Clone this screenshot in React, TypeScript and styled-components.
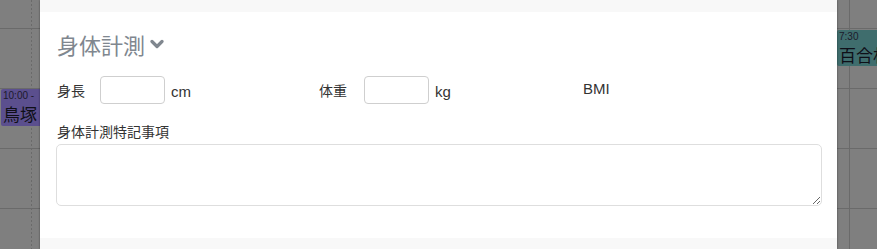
import styled, { createGlobalStyle } from "styled-components";

const GlobalStyle = createGlobalStyle`
  html, body {
    margin: 0;
    padding: 0;
    background: #7f7f7f;
  }
  body {
    font-family: "Helvetica Neue", "Liberation Sans", "Noto Sans CJK JP", sans-serif;
  }
`;

const Page = styled.div`
  display: flex;
  width: 877px;
  height: 249px;
  overflow: hidden;
  background: #7f7f7f;
`;

const Side = styled.div<{ $width: number }>`
  position: relative;
  flex: 0 0 ${(p) => p.$width}px;
  overflow: hidden;
`;

const SlotStack = styled.div<{ $lineLeft: number; $dotted?: boolean }>`
  display: flex;
  flex-direction: column;
  height: 100%;
  background-image: ${(p) =>
    p.$dotted
      ? `repeating-linear-gradient(to bottom, #6a6a6a 0 2px, transparent 2px 4px)`
      : `linear-gradient(#6a6a6a, #6a6a6a)`};
  background-size: 1px 100%;
  background-repeat: no-repeat;
  background-position: ${(p) => p.$lineLeft}px 0;
`;

const Slot = styled.div<{ $h: number }>`
  flex: 0 0 ${(p) => p.$h}px;
  border-bottom: 1px solid #6a6a6a;
`;

const Event = styled.div<{ $bg: string; $top: number; $left: number; $h: number }>`
  position: absolute;
  top: ${(p) => p.$top}px;
  left: ${(p) => p.$left}px;
  right: 0;
  height: ${(p) => p.$h}px;
  background: ${(p) => p.$bg};
  border-radius: 2px 0 0 2px;
  padding: 0 0 0 2px;
  box-sizing: border-box;
  overflow: hidden;
  white-space: nowrap;
`;

const EventTime = styled.div`
  font-size: 10px;
  line-height: 12px;
  margin-top: 1px;
  color: #1c1a2c;
`;

const EventTitle = styled.div`
  font-family: "Noto Sans CJK JP", sans-serif;
  font-size: 17px;
  line-height: 24px;
  color: #0f0f18;
`;

const Modal = styled.div`
  flex: 0 0 797px;
  display: flex;
  flex-direction: column;
  background: #fff;
  box-shadow: 0 0 2px rgba(0, 0, 0, 0.45);
  z-index: 1;
`;

const Band = styled.div<{ $h: number }>`
  flex: 0 0 ${(p) => p.$h}px;
  background: #f8f8f8;
`;

const Body = styled.div`
  flex: 1;
  padding: 16px 15px 0 16px;
`;

const Title = styled.h3`
  margin: 0 0 0 1px;
  display: flex;
  align-items: center;
  gap: 5px;
  font-family: "Noto Sans CJK JP", sans-serif;
  font-size: 22px;
  line-height: 32px;
  font-weight: 400;
  color: #80878f;
`;

const FieldRow = styled.div`
  display: grid;
  grid-template-columns: 262px 264px auto;
  margin: 16px 0 0 1px;
  height: 28px;
`;

const Field = styled.div`
  display: flex;
  align-items: center;
  font-size: 14px;
  color: #333;
`;

const Label = styled.span<{ $w: number }>`
  font-family: "Noto Sans CJK JP", sans-serif;
  font-size: 14px;
  width: ${(p) => p.$w}px;
`;

const NumInput = styled.input`
  width: 65px;
  height: 28px;
  box-sizing: border-box;
  border: 1px solid #cfcfcf;
  border-radius: 4px;
  padding: 0 6px;
  margin-right: 6px;
  font-size: 14px;
  outline: none;
`;

const Unit = styled.span`
  font-size: 15px;
  color: #333;
  margin-top: 2px;
`;

const Bmi = styled.span`
  font-size: 15px;
  color: #333;
  margin-top: -3px;
`;

const NoteLabel = styled.div`
  margin: 17px 0 0 1px;
  font-family: "Noto Sans CJK JP", sans-serif;
  font-size: 14px;
  line-height: 20px;
  color: #333;
`;

const Note = styled.textarea`
  display: block;
  width: 766px;
  height: 62px;
  box-sizing: border-box;
  margin-top: 3px;
  border: 1px solid #dedede;
  border-radius: 5px;
  outline: none;
  resize: vertical;
  font-size: 14px;
`;

function Chevron() {
  return (
    <svg width="14" height="12" viewBox="0 0 14 12">
      <polyline
        points="2,3.5 7,8.5 12,3.5"
        fill="none"
        stroke="#80878f"
        strokeWidth="3.2"
        strokeLinecap="round"
        strokeLinejoin="round"
      />
    </svg>
  );
}

const slots = [28, 59, 59, 59, 59];

function App() {
  return (
    <>
      <GlobalStyle />
      <Page>
        <Side $width={40}>
          <SlotStack $lineLeft={31} $dotted>
            {slots.map((h, i) => (
              <Slot key={i} $h={h} />
            ))}
          </SlotStack>
          <Event $bg="#5b4f8e" $top={89} $left={1} $h={37}>
            <EventTime>10:00 -</EventTime>
            <EventTitle>鳥塚</EventTitle>
          </Event>
        </Side>
        <Modal>
          <Band $h={12} />
          <Body>
            <Title>
              身体計測
              <Chevron />
            </Title>
            <FieldRow>
              <Field>
                <Label $w={43}>身長</Label>
                <NumInput />
                <Unit>cm</Unit>
              </Field>
              <Field>
                <Label $w={45}>体重</Label>
                <NumInput />
                <Unit>kg</Unit>
              </Field>
              <Field>
                <Bmi>BMI</Bmi>
              </Field>
            </FieldRow>
            <NoteLabel>身体計測特記事項</NoteLabel>
            <Note />
          </Body>
          <Band $h={11} />
        </Modal>
        <Side $width={40}>
          <SlotStack $lineLeft={12}>
            {slots.map((h, i) => (
              <Slot key={i} $h={h} />
            ))}
          </SlotStack>
          <Event $bg="#3f6d6d" $top={30} $left={0} $h={36}>
            <EventTime>7:30</EventTime>
            <EventTitle>百合杉</EventTitle>
          </Event>
        </Side>
      </Page>
    </>
  );
}

export default App;
